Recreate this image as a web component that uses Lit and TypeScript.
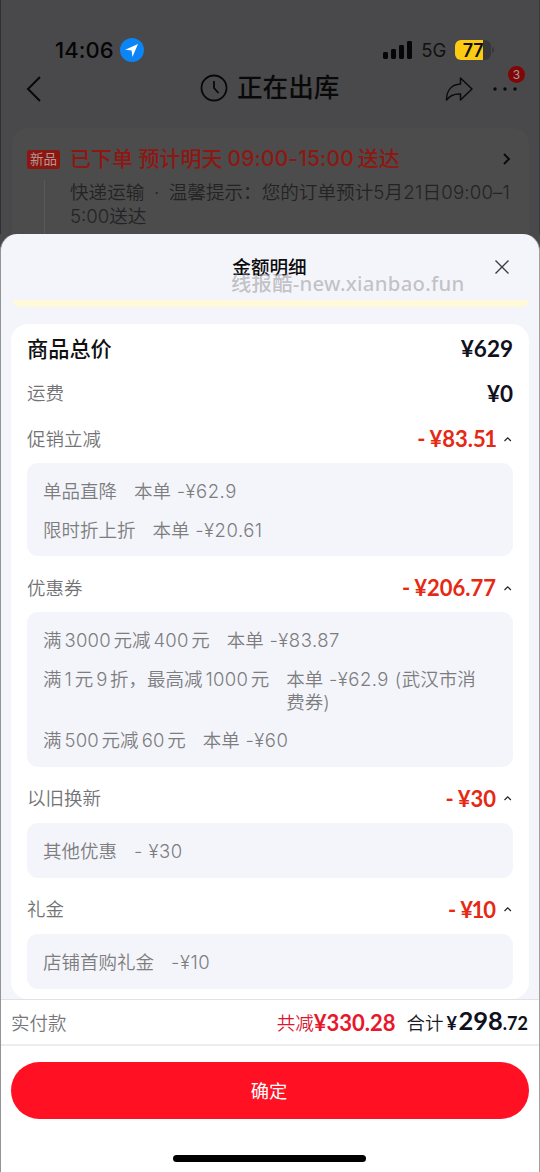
import { LitElement, html, css, svg } from "lit";
import { customElement } from "lit/decorators.js";

interface Line { name: string; value: string; }
interface Group { title: string; amount: string; lines: Line[]; }

const groups: Group[] = [
  { title: "促销立减", amount: "83.51", lines: [
    { name: "单品直降", value: "本单 -¥62.9" },
    { name: "限时折上折", value: "本单 -¥20.61" },
  ] },
  { title: "优惠券", amount: "206.77", lines: [
    { name: "满3000元减400元", value: "本单 -¥83.87" },
    { name: "满1元9折，最高减1000元", value: "本单 -¥62.9 (武汉市消费券)" },
    { name: "满500元减60元", value: "本单 -¥60" },
  ] },
  { title: "以旧换新", amount: "30", lines: [{ name: "其他优惠", value: "- ¥30" }] },
  { title: "礼金", amount: "10", lines: [{ name: "店铺首购礼金", value: "-¥10" }] },
];

@customElement("app-root")
export class AppRoot extends LitElement {
  static styles = css`
    :host { display: block; width: 540px; height: 1172px; overflow: hidden; position: relative;
      background: #49494b; color: #0c0c0e; font-family: Inter, "Noto Sans CJK SC", sans-serif; }
    * { box-sizing: border-box; }
    svg { display: block; flex: none; }
    .screen { display: flex; flex-direction: column; height: 1172px; white-space: nowrap; }
    .backdrop { height: 234px; flex: none; display: flex; flex-direction: column; border-left: 1px solid #2f2f31; border-right: 1px solid #38383a; }
    .status { height: 64px; padding: 36px 45px 0 54px; display: flex; align-items: center; }
    .time { font-size: 22px; font-weight: 500; letter-spacing: .1px; color: #050506; width: 65px; }
    .cell { margin-left: auto; display: flex; align-items: center; }
    .net { font-size: 18.5px; color: #111; margin: 0 9px; letter-spacing: -.2px; }
    .battery { width: 36px; height: 20px; border-radius: 6px; display: flex; align-items: center; justify-content: center;
      background: linear-gradient(90deg, #fdcb12 28px, #38383a 28px); font-weight: 600; font-size: 18px; letter-spacing: -.2px; color: #111; }
    .cap { width: 2px; height: 6px; border-radius: 0 2px 2px 0; background: #39393b; margin-left: 1px; }
    .nav { height: 50px; display: grid; grid-template-columns: 150px 1fr 150px; align-items: center; padding: 0 22px 0 24px; }
    .heading { display: flex; align-items: center; gap: 9px; font-size: 25.6px; line-height: 34px; font-weight: 500; padding-left: 25px; color: #09090a; margin-top: -2px; }
    .tools { display: flex; align-items: center; justify-content: flex-end; gap: 20px; position: relative; }
    .badge { position: absolute; right: -8px; top: -10px; width: 17px; height: 17px; border-radius: 50%; background: #820606;
      color: #a0a0a0; font-size: 12px; line-height: 17px; text-align: center; }
    .order { margin: 14px 10px 0 11px; flex: 1; border-radius: 16px 16px 0 0; background: #4c4c4c; padding: 17px 17px 0 15px;
      display: grid; grid-template-columns: 43px 1fr; grid-template-rows: 28px 1fr; }
    .tag { align-self: center; width: 33px; height: 19px; background: #8c1710; color: #b09a97; font-size: 13.5px; line-height: 18px; border-radius: 3px; text-align: center; }
    .state { display: flex; align-items: center; justify-content: space-between; font-size: 21px; line-height: 28px; font-weight: 500; color: #8f1712; }
    .state .hours { margin: 0 4px 0 5px; letter-spacing: .1px; }
    .rail { width: 1px; background: #59595a; margin: 7px 0 0 17px; }
    .tip { font-size: 18.6px; line-height: 24.5px; color: #232324; font-weight: 350; padding-top: 6.6px; }
    .dot { margin: 0 4.3px; }
    .tip .digits { letter-spacing: .2px; }
    .sheet { flex: 1; display: flex; flex-direction: column; background: #f4f5fa; border-radius: 17px 17px 0 0; overflow: hidden;
      border-left: 1px solid #949498; border-right: 1px solid #a0a0a0; position: relative; }
    .top { height: 66px; display: grid; grid-template-columns: 74px 1fr 74px; align-items: center; justify-items: center; font-size: 18.6px; font-weight: 500; }
    .top span { padding: 0 1px 3px 0; }
    .mark { position: absolute; left: 230px; top: 36px; font-size: 20.3px; line-height: 26px; color: rgba(150,150,155,.55);
      font-family: "Noto Sans", "Noto Sans CJK SC", sans-serif; font-weight: 500; letter-spacing: .3px; }
    .strip { height: 7px; margin: 0 10px 17px 12px; background: #fff9d9; border-radius: 0 0 8px 8px; }
    .card { margin: 0 10px; background: #fff; border-radius: 17px; height: 675px; padding: 0 16px; }
    .row { display: flex; align-items: center; justify-content: space-between; font-size: 18.5px; font-weight: 350; color: #737376; height: 49px; }
    .label { padding-bottom: 2px; }
    .total { height: 48px; font-size: 21.2px; font-weight: 500; color: #101010; }
    .ship { height: 42px; }
    .price { font-family: Lato, sans-serif; font-weight: 700; font-size: 22px; color: #10111d; }
    .row > .price:not(.cut) { font-size: 22.5px; }
    .cut { display: flex; align-items: center; color: #e52914; }
    .cut .minus { margin-right: 4px; }
    .cut svg { margin-left: 7px; }
    .one { margin: 0 -1px 0 -1.5px; }
    .box + .row { margin-top: 7px; }
    .box { background: #f4f5fa; border-radius: 11px; padding: 17px 16px 15.2px; display: flex; flex-direction: column; gap: 16px;
      font-size: 18.5px; line-height: 22.6px; color: #7d7d80; font-weight: 350; }
    .line { display: flex; align-items: flex-start; gap: 17px; }
    .name { flex: none; }
    .line .value { white-space: normal; width: 194px; word-break: break-all; }
    .value .num { letter-spacing: .5px; }
    .name .num { margin: 0 2.6px 0 3px; letter-spacing: .22px; }
    .pay { height: 47px; background: #fff; border-top: 1px solid #e2e2e6; border-bottom: 2px solid #ededef; padding: 0 11px 0 10px;
      display: flex; align-items: center; font-size: 18.5px; font-weight: 350; color: #77777a; }
    .pay .label { padding-bottom: 1px; }
    .saved { margin-left: auto; display: flex; align-items: center; color: #dc1730; }
    .saved .price { color: #e8172c; }
    .sum { display: flex; align-items: baseline; margin: -4px 0 0 11px; color: #1a1b26; }
    .sum .price { font-size: 18px; }
    .sum .unit { margin: 0 1.5px 0 3px; }
    .sum .price.big { font-size: 25.5px; }
    .bottom { flex: 1; background: #fff; padding: 16px 10px 10px; display: flex; flex-direction: column; align-items: center; justify-content: space-between; }
    .confirm { align-self: stretch; height: 57px; border: 0; border-radius: 29px; background: #ff1022; color: #fff; font: inherit; font-size: 18.3px; padding: 0 2px 1px 0; }
    .home { width: 193px; height: 7px; border-radius: 4px; background: #000; margin-right: 2px; }
  `;

  private latin(text: string) {
    return text.split(/([\x20-\x7e¥]+)/).filter(Boolean).map((p) => (/^[\x20-\x7e¥]+$/.test(p) ? html`<span class="num">${p}</span>` : p));
  }

  private amount(text: string) {
    return text.split(/(1)/).map((p) => (p === "1" ? html`<span class="one">1</span>` : p));
  }

  private group(g: Group) {
    return html`<div class="row"><span class="label">${g.title}</span>
        <span class="price cut"><span class="minus">-</span><span>¥${this.amount(g.amount)}</span>
          <svg width="10" height="8" viewBox="0 0 10 8"><path d="M1.5 6 L4.7 2.8 L7.9 6" fill="none" stroke="#222" stroke-width="1.2"/></svg></span></div>
      <div class="box">${g.lines.map((l) => html`<div class="line"><span class="name">${this.latin(l.name)}</span><span class="value">${this.latin(l.value)}</span></div>`)}</div>`;
  }

  render() {
    return html`<div class="screen">
      <div class="backdrop">
        <div class="status">
          <span class="time">14:06</span>
          <svg width="24" height="24" viewBox="0 0 24 24"><circle cx="12" cy="12" r="12" fill="#0b84f5"/><path d="M18 6 L5.2 11.8 L11.6 12.6 L12.4 19 Z" fill="#fff"/></svg>
          <div class="cell">
            <svg width="29" height="18" viewBox="0 0 29 18" fill="#060607">${[[0, 7], [8, 10], [16, 14], [24, 18]].map(([x, h]) => svg`<rect x=${x} y=${18 - h} width="5" height=${h} rx="1.4"/>`)}</svg>
            <span class="net">5G</span><span class="battery">77</span><span class="cap"></span>
          </div>
        </div>
        <div class="nav">
          <svg width="18" height="28" viewBox="0 0 18 28"><path d="M15 2 L3 14 L15 26" fill="none" stroke="#080809" stroke-width="2"/></svg>
          <div class="heading">
            <svg width="28" height="28" viewBox="0 0 28 28" fill="none" stroke="#080809" stroke-width="1.8"><circle cx="14" cy="14" r="12.5"/><path d="M14 7 V14 L18.5 19"/></svg>
            <span>正在出库</span>
          </div>
          <div class="tools">
            <svg width="28" height="26" viewBox="0 0 28 26"><path d="M15.5 2 L27 13 L15.5 24 V18 C9 17.5 5 19.5 1.5 24 C1.5 14 7 8.5 15.5 8 Z" fill="none" stroke="#0b0b0c" stroke-width="1.5" stroke-linejoin="round"/></svg>
            <svg width="24" height="6" viewBox="0 0 24 6" fill="#080809"><circle cx="2" cy="3" r="1.7"/><circle cx="12" cy="3" r="1.7"/><circle cx="22" cy="3" r="1.7"/></svg>
            <span class="badge">3</span>
          </div>
        </div>
        <div class="order">
          <span class="tag">新品</span>
          <div class="state"><span>已下单 预计明天<span class="hours">09:00-15:00</span>送达</span>
            <svg width="10" height="14" viewBox="0 0 10 14"><path d="M2 2 L7 7 L2 12" fill="none" stroke="#080808" stroke-width="1.8"/></svg></div>
          <span class="rail"></span>
          <div class="tip">快递运输<span class="dot"> · </span>温馨提示：您的订单预计<span class="digits">5月21日09:00–1</span><br>5:00送达</div>
        </div>
      </div>
      <div class="sheet">
        <div class="top"><span></span><span>金额明细</span>
          <svg width="16" height="16" viewBox="0 0 16 16"><path d="M1.5 1.5 L14.5 14.5 M14.5 1.5 L1.5 14.5" stroke="#3c3c40" stroke-width="1.4"/></svg></div>
        <span class="mark">线报酷-new.xianbao.fun</span>
        <div class="strip"></div>
        <div class="card">
          <div class="row total"><span class="label">商品总价</span><span class="price">¥629</span></div>
          <div class="row ship"><span class="label">运费</span><span class="price">¥0</span></div>
          ${groups.map((g) => this.group(g))}
        </div>
        <div class="pay"><span class="label">实付款</span>
          <span class="saved"><span class="label">共减</span><span class="price">¥330.28</span></span>
          <span class="sum">合计<span class="price unit">¥</span><span class="price big">298</span><span class="price">.72</span></span></div>
        <div class="bottom"><button class="confirm">确定</button><div class="home"></div></div>
      </div>
    </div>`;
  }
}
